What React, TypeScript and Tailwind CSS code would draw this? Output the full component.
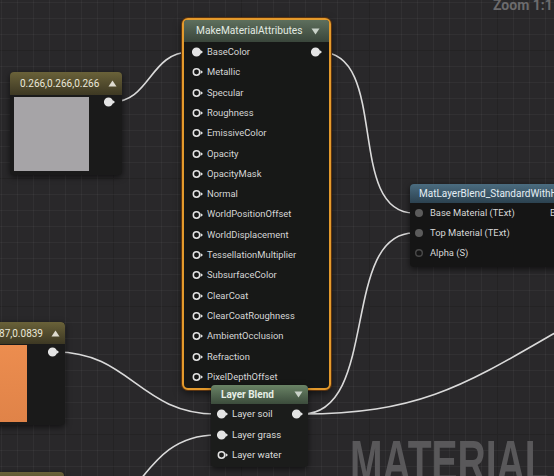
import React from "react";

function Pin({ filled = false, color = "#e4e4e4", arrow = true }: { filled?: boolean; color?: string; arrow?: boolean }) {
  return (
    <svg width="12" height="10" viewBox="0 0 12 10" className="shrink-0">
      <circle cx="4.5" cy="5" r={filled ? 3.8 : 3.2} fill={filled ? color : "none"} stroke={color} strokeWidth="1.5" />
      {arrow && <path d="M8.6 2.9 L11 5 L8.6 7.1 Z" fill={color} />}
    </svg>
  );
}

function TriUp({ color = "#dedbd0" }: { color?: string }) {
  return (
    <svg width="9" height="7" viewBox="0 0 9 7" className="shrink-0">
      <path d="M0.5 6.5 L4.5 0.5 L8.5 6.5 Z" fill={color} />
    </svg>
  );
}

function TriDown({ color = "#c9d2c9" }: { color?: string }) {
  return (
    <svg width="9" height="7" viewBox="0 0 9 7" className="shrink-0">
      <path d="M0.5 0.5 L8.5 0.5 L4.5 6.5 Z" fill={color} />
    </svg>
  );
}

const attrs = [
  "BaseColor",
  "Metallic",
  "Specular",
  "Roughness",
  "EmissiveColor",
  "Opacity",
  "OpacityMask",
  "Normal",
  "WorldPositionOffset",
  "WorldDisplacement",
  "TessellationMultiplier",
  "SubsurfaceColor",
  "ClearCoat",
  "ClearCoatRoughness",
  "AmbientOcclusion",
  "Refraction",
  "PixelDepthOffset",
];

export default function App() {
  return (
    <div className="relative h-[476px] w-[554px] overflow-hidden bg-[#29282a] font-[family-name:Roboto,sans-serif] bg-[linear-gradient(to_right,rgba(255,255,255,0.04)_1px,transparent_1px),linear-gradient(to_bottom,rgba(255,255,255,0.04)_1px,transparent_1px),linear-gradient(to_right,rgba(0,0,0,0.35)_1px,transparent_1px),linear-gradient(to_bottom,rgba(0,0,0,0.35)_1px,transparent_1px)] bg-[size:16px_16px,16px_16px,128px_128px,128px_128px] bg-[position:1px_2px,1px_2px,113px_50px,113px_50px]">
      {/* zoom label */}
      <div className="absolute left-[493px] top-[-2px] whitespace-nowrap text-[14px] font-bold leading-none text-[#6c6b6d]">Zoom 1:1</div>

      {/* watermark */}
      <div className="absolute left-[350px] top-[432px] origin-left scale-x-[0.65] whitespace-nowrap font-[family-name:'Liberation_Sans',Arial,sans-serif] text-[60px] font-bold leading-none text-[#59585a]">
        MATERIAL
      </div>

      {/* wires */}
      <svg className="absolute left-0 top-0" width="554" height="476" viewBox="0 0 554 476" fill="none">
        <g stroke="#dadada" strokeWidth="1.6" fill="none">
          <path d="M112 102 C150 102 150 52 190 52" />
          <path d="M320 52 C390 52 345 213 414 213" />
          <path d="M302 414 C380 414 340 233 414 233" />
          <path d="M302 414 C420 414 465 385 560 330" />
          <path d="M56 352 C130 352 140 414 216 414" />
          <path d="M80 520 C140 520 140 435 216 435" />
        </g>
      </svg>

      {/* constant node 1 */}
      <div className="absolute left-[10px] top-[72px] w-[112px] rounded-[4px] bg-[#1a1a1a] shadow-[0_2px_6px_rgba(0,0,0,0.6)]">
        <div className="flex h-[23px] items-center justify-between rounded-t-[4px] bg-linear-to-b from-[#6a6239] to-[#3d3823] pl-[10px] pr-[5px] text-[10px] text-[#ebe8da]">
          <span className="whitespace-nowrap">0.266,0.266,0.266</span>
          <TriUp />
        </div>
        <div className="flex items-start justify-between pb-[4px] pl-[4px] pr-[6px] pt-[2px]">
          <div className="h-[74px] w-[75px] bg-[#a6a4a7]" />
          <Pin filled />
        </div>
      </div>

      {/* constant node 2 (orange, partly off-screen) */}
      <div className="absolute left-[-52px] top-[322px] w-[117px] overflow-hidden rounded-[4px] bg-[#1a1a1a] shadow-[0_2px_6px_rgba(0,0,0,0.6)]">
        <div className="flex h-[22px] items-center justify-end gap-[8px] rounded-t-[4px] bg-linear-to-b from-[#6a6239] to-[#3d3823] pr-[5px] text-[10px] text-[#ebe8da]">
          <span className="whitespace-nowrap">0.623,0.287,0.0839</span>
          <TriUp />
        </div>
        <div className="flex items-start justify-between pb-[3px] pl-[4px] pr-[5px] pt-[1px]">
          <div className="h-[77px] w-[75px] bg-linear-to-b from-[#ec8d4f] to-[#e08348]" />
          <div className="pt-[2px]">
            <Pin filled />
          </div>
        </div>
      </div>

      {/* constant node 3 (bottom, header only visible) */}
      <div className="absolute left-[-52px] top-[472px] w-[116px] rounded-[4px] bg-[#1a1a1a] shadow-[0_2px_6px_rgba(0,0,0,0.6)]">
        <div className="h-[22px] rounded-t-[4px] bg-linear-to-b from-[#6a6239] to-[#3d3823]" />
      </div>

      {/* MakeMaterialAttributes */}
      <div className="absolute left-[182px] top-[18px] flex h-[372px] w-[149px] flex-col rounded-[6px] border-2 border-[#e49a2c] bg-[#171817] shadow-[0_0_0_1px_#5b3410,0_3px_8px_rgba(0,0,0,0.6)]">
        <div className="flex h-[22px] shrink-0 items-center justify-between rounded-t-[3px] bg-linear-to-b from-[#5e6f5d] to-[#3a463b] pl-[12px] pr-[9px] text-[10.2px] text-[#e2eae2]">
          <span className="whitespace-nowrap">MakeMaterialAttributes</span>
          <TriDown />
        </div>
        <div className="flex flex-col">
          {attrs.map((a, i) => (
            <div key={a} className="flex h-[20.3px] items-center justify-between pl-[7.5px] pr-[6.5px]">
              <div className="flex items-center gap-[3.5px]">
                <Pin filled={i === 0} />
                <span className="whitespace-nowrap text-[9.4px] text-[#d6d6d6]">{a}</span>
              </div>
              {i === 0 && <Pin filled />}
            </div>
          ))}
        </div>
      </div>

      {/* Layer Blend */}
      <div className="absolute left-[211px] top-[385px] w-[97px] rounded-[4px] bg-[#1b1c1b] pb-[1px] shadow-[0_2px_6px_rgba(0,0,0,0.6)]">
        <div className="flex h-[19px] items-center justify-between rounded-t-[4px] bg-linear-to-b from-[#6a8466] to-[#3c4c3c] pl-[10px] pr-[5px] text-[10px] font-bold text-[#e6eee6]">
          <span className="whitespace-nowrap">Layer Blend</span>
          <TriDown />
        </div>
        {[
          ["Layer soil", true, true],
          ["Layer grass", true, false],
          ["Layer water", false, false],
        ].map(([label, filled, out]) => (
          <div key={label as string} className="flex h-[20.5px] items-center justify-between pl-[5.5px] pr-[4.5px]">
            <div className="flex items-center gap-[3.5px]">
              <Pin filled={filled as boolean} />
              <span className="whitespace-nowrap text-[9.6px] text-[#dcdcdc]">{label as string}</span>
            </div>
            {out ? <Pin filled /> : null}
          </div>
        ))}
      </div>

      {/* MatLayerBlend_StandardWith... */}
      <div className="absolute left-[410px] top-[184px] w-[200px] rounded-[4px] bg-[#151515] pb-[4px] shadow-[0_2px_6px_rgba(0,0,0,0.6)]">
        <div className="flex h-[19px] items-center rounded-t-[4px] bg-linear-to-b from-[#4b6c80] to-[#2c4250] pl-[9px] text-[10px] text-[#e4edf3]">
          <span className="whitespace-nowrap">MatLayerBlend_StandardWithHeight</span>
        </div>
        {[
          ["Base Material (TExt)", true],
          ["Top Material (TExt)", true],
          ["Alpha (S)", false],
        ].map(([label, conn], i) => (
          <div key={label as string} className="grid h-[20px] grid-cols-[132px_auto] items-center gap-[4px] pl-[4px]">
            <div className="flex items-center gap-[6px]">
              <svg width="10" height="10" viewBox="0 0 10 10" className="shrink-0">
                {conn ? (
                  <circle cx="5" cy="5" r="4" fill="#5b5b5b" />
                ) : (
                  <circle cx="5" cy="5" r="3.3" fill="none" stroke="#4a4a4a" strokeWidth="1.4" />
                )}
              </svg>
              <span className="whitespace-nowrap text-[9.4px] text-[#d8d8d8]">{label as string}</span>
            </div>
            {i === 0 ? <span className="whitespace-nowrap text-[9.4px] text-[#d8d8d8]">Blended Material</span> : <span />}
          </div>
        ))}
      </div>
    </div>
  );
}
